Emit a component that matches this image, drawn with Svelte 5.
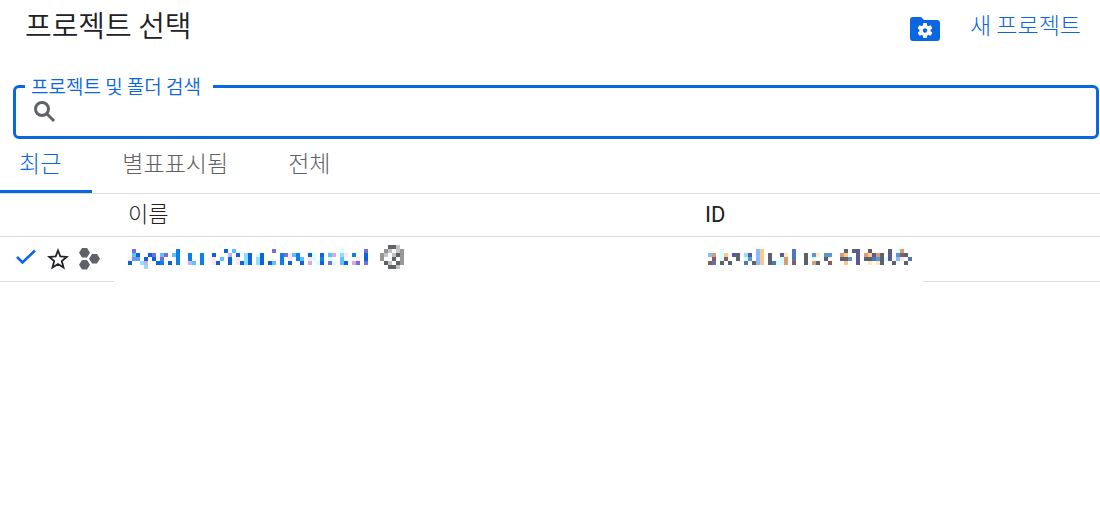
<script>
  const palette = {
    B: '#0b63e0', b: '#0b7fea', l: '#5fc0fa', c: '#8ee0ff', p: '#766fd9', v: '#6a9ae4',
    k: '#d1ace6', r: '#fce8f0', y: '#ffffe8', q: '#d8ffff',
    G: '#606368', g: '#96979b', h: '#c3c3c5',
    D: '#5b626d', N: '#59599a', n: '#5078b8', s: '#5b95d5', t: '#84bdfb',
    o: '#ffc78c', O: '#d99c72', m: '#8a5a63', e: '#ffe9b8'
  };
  // Each mark is a column number followed by its palette key.
  const name = [
    '1p 12b 24B 26l 34y 36p 51y 53q 59p',
    '1l 2B 5B 6p 8l 9p 11l 12b 15b 18b 21B 25k 27B 29c 30B 32q 33B 34y 38b 39p 40r 41l 42b 45B 46q 48B 50l 51k 53c 54r 56b 57y 59B',
    '0r 1v 2v 4B 6B 8p 12b 15b 18b 21r 23l 25B 27r 29c 30B 32c 33B 34y 38b 40r 42b 43l 45r 46q 48b 50q 53l 57r 59B',
    '0B 3c 4k 7B 8b 10B 12b 15k 16l 18b 21r 22B 25B 27r 28B 29c 30B 32c 33B 35B 36l 38b 40B 43B 45k 47q 48B 50p 51q 53l 54B 56k 57p 59p',
    '4c'
  ];
  const badge = ['2G 3G 4h', '1g 2h 4h 5g', '0g 1h 3h 4G 5g', '0g 3G 5g', '1G 2h 4G 5g', '2G 3G 4h'];
  const id = [
    '3q 12t 13o 21n 34D 36D 37N 40D 45D 47q 48O',
    '0t 1O 3q 4o 6N 7D 9c 10N 12t 13o 15D 18N 19e 21n 24D 26s 27e 29s 30s 33O 34o 37N 39O 40o 41N 42O 43D 45N 47s 48m 49D',
    '1m 3q 4m 7D 9q 10s 12t 13o 15D 18q 19O 21n 24D 26q 29D 33D 34D 35s 37N 39D 40D 41n 42s 43D 44q 45N 47t 48r 50n',
    '0m 1n 3D 5D 9n 11D 12t 13o 15D 16n 17q 18q 19O 21m 24D 26O 27D 30m 34o 37N 40e 42e 43D 46D 49D'
  ];
  const cells = (rows) => rows.flatMap((row, y) =>
    row.split(' ').map((mark) => ({ x: parseInt(mark) * 4, y: y * 4, fill: palette[mark.at(-1)] })));
  const tabs = ['최근', '별표표시됨', '전체'];
  let active = $state(0);
  let query = $state('');
</script>

{#snippet mosaic(rows, width, height, label)}
  <svg {width} {height} shape-rendering="crispEdges" role="img" aria-label={label}>
    {#each cells(rows) as c}
      <rect x={c.x} y={c.y} width="4" height="4" fill={c.fill} />
    {/each}
  </svg>
{/snippet}

<main>
  <header>
    <h1>프로젝트 선택</h1>
    <button class="folder" aria-label="폴더 관리">
      <svg width="30" height="24" viewBox="0 0 30 24">
        <path fill="#0b66e2" d="M3 0h8l3 3h13q3 0 3 3v15q0 3-3 3H3q-3 0-3-3V3q0-3 3-3z" />
        <g fill="#fff" transform="translate(15 13.5)">
          <circle r="5.6" />
          {#each [0, 60, 120] as a}
            <rect x="-2" y="-7.5" width="4" height="15" rx="1" transform="rotate({a})" />
          {/each}
          <circle r="2.2" fill="#0b66e2" />
        </g>
      </svg>
    </button>
    <button class="new">새 프로젝트</button>
  </header>

  <fieldset>
    <legend><label for="search">프로젝트 및 폴더 검색</label></legend>
    <svg width="22" height="22" viewBox="0 0 22 22" fill="none" stroke="#5f6368" stroke-width="3">
      <circle cx="8" cy="8" r="6.500" />
      <path d="M12 12l8 8" />
    </svg>
    <input id="search" type="text" bind:value={query} />
  </fieldset>

  <nav role="tablist">
    {#each tabs as tab, i}
      <button role="tab" aria-selected={active === i} class:active={active === i} onclick={() => (active = i)}>{tab}</button>
    {/each}
  </nav>

  <table>
    <thead>
      <tr><th class="marks"></th><th class="name">이름</th><th>ID</th><th class="rest"></th></tr>
    </thead>
    <tbody>
      <tr>
        <td class="marks lined">
          <div class="icons">
            <svg width="22" height="22" viewBox="0 0 22 22" fill="none" stroke="#0b66e2" stroke-width="2.600"><path d="M2 9l5.500 5.500L20 2.500" /></svg>
            <button aria-label="별표">
              <svg width="22" height="22" viewBox="0 0 22 22" fill="none" stroke="#202124" stroke-width="1.800"><path d="M11 2.500L13.300 8.400L19.700 8.900L14.800 13L16.500 19.500L11 16L5.500 19.500L7.200 13L2.300 8.900L8.700 8.400Z" /></svg>
            </button>
            <svg width="22" height="22" viewBox="0 0 22 22" fill="#5f6368">
              <path d="M3 0h5l3 4.700-3 4.700H3L0 4.700zM3 12h5l3 4.700-3 4.700H3L0 16.700zM13 6h5l3 4.700-3 4.700h-5l-3-4.700z" />
            </svg>
          </div>
        </td>
        <td>
          <div class="project">
            {@render mosaic(name, 244, 20, '프로젝트 이름')}
            {@render mosaic(badge, 24, 24, '도움말')}
          </div>
        </td>
        <td><div class="project code">{@render mosaic(id, 208, 20, '프로젝트 ID')}</div></td>
        <td class="lined"></td>
      </tr>
    </tbody>
  </table>
</main>

<style>
  :global(body) { margin: 0; background: #fff; }
  main { font-family: "Noto Sans CJK KR", sans-serif; font-weight: 300; color: #202124; }
  button { border: 0; padding: 0; background: none; font: inherit; color: inherit; cursor: pointer; }
  svg { display: block; flex: none; }
  header { display: flex; align-items: flex-start; height: 76px; padding: 0 19px 0 25px; box-sizing: border-box; }
  h1 { margin: 4px auto 0 0; font-size: 29px; line-height: 40px; font-weight: 350; }
  .folder { margin: 17px 30px 0 0; }
  .new { margin-top: 8px; font-size: 23px; line-height: 32px; color: #0b66e2; }
  fieldset { display: flex; align-items: center; gap: 12px; min-width: 0; margin: 0 1px 0 13px; padding: 0 18px 8px 18px; border: 3px solid #0b66e2; border-radius: 6px; }
  legend { margin-left: -9px; padding: 0 12px 0 6px; font-size: 19px; line-height: 20px; font-weight: 350; color: #0b66e2; }
  input { flex: 1; min-width: 0; height: 32px; border: 0; padding: 0; outline: 0; background: none; font: inherit; font-size: 20px; }
  nav { display: flex; gap: 11px; border-bottom: 1px solid #dadce0; }
  nav button { height: 54px; padding: 0 30px 5px 19px; border-bottom: 3px solid transparent; font-size: 23px; line-height: 32px; color: #5f6368; }
  nav .active { padding-right: 31px; border-color: #0b66e2; color: #0b66e2; }
  table { width: 100%; border-collapse: collapse; table-layout: fixed; }
  th, td { padding: 0; text-align: left; }
  th { box-sizing: border-box; height: 42px; padding: 0 0 5px 14px; font-size: 22px; line-height: 32px; font-weight: 300; border-bottom: 1px solid #dadce0; }
  th:nth-child(3) { padding-bottom: 0; font-family: Roboto, sans-serif; font-weight: 400; }
  td { height: 44px; }
  .lined { border-bottom: 1px solid #dadce0; }
  .marks { width: 114px; }
  .name { width: 577px; }
  .rest { width: 177px; }
  .icons { display: flex; align-items: center; gap: 10px; padding-left: 15px; }
  .project { display: flex; align-items: flex-end; gap: 8px; height: 24px; padding: 0 0 4px 14px; }
  .code { padding-left: 17px; }
</style>
